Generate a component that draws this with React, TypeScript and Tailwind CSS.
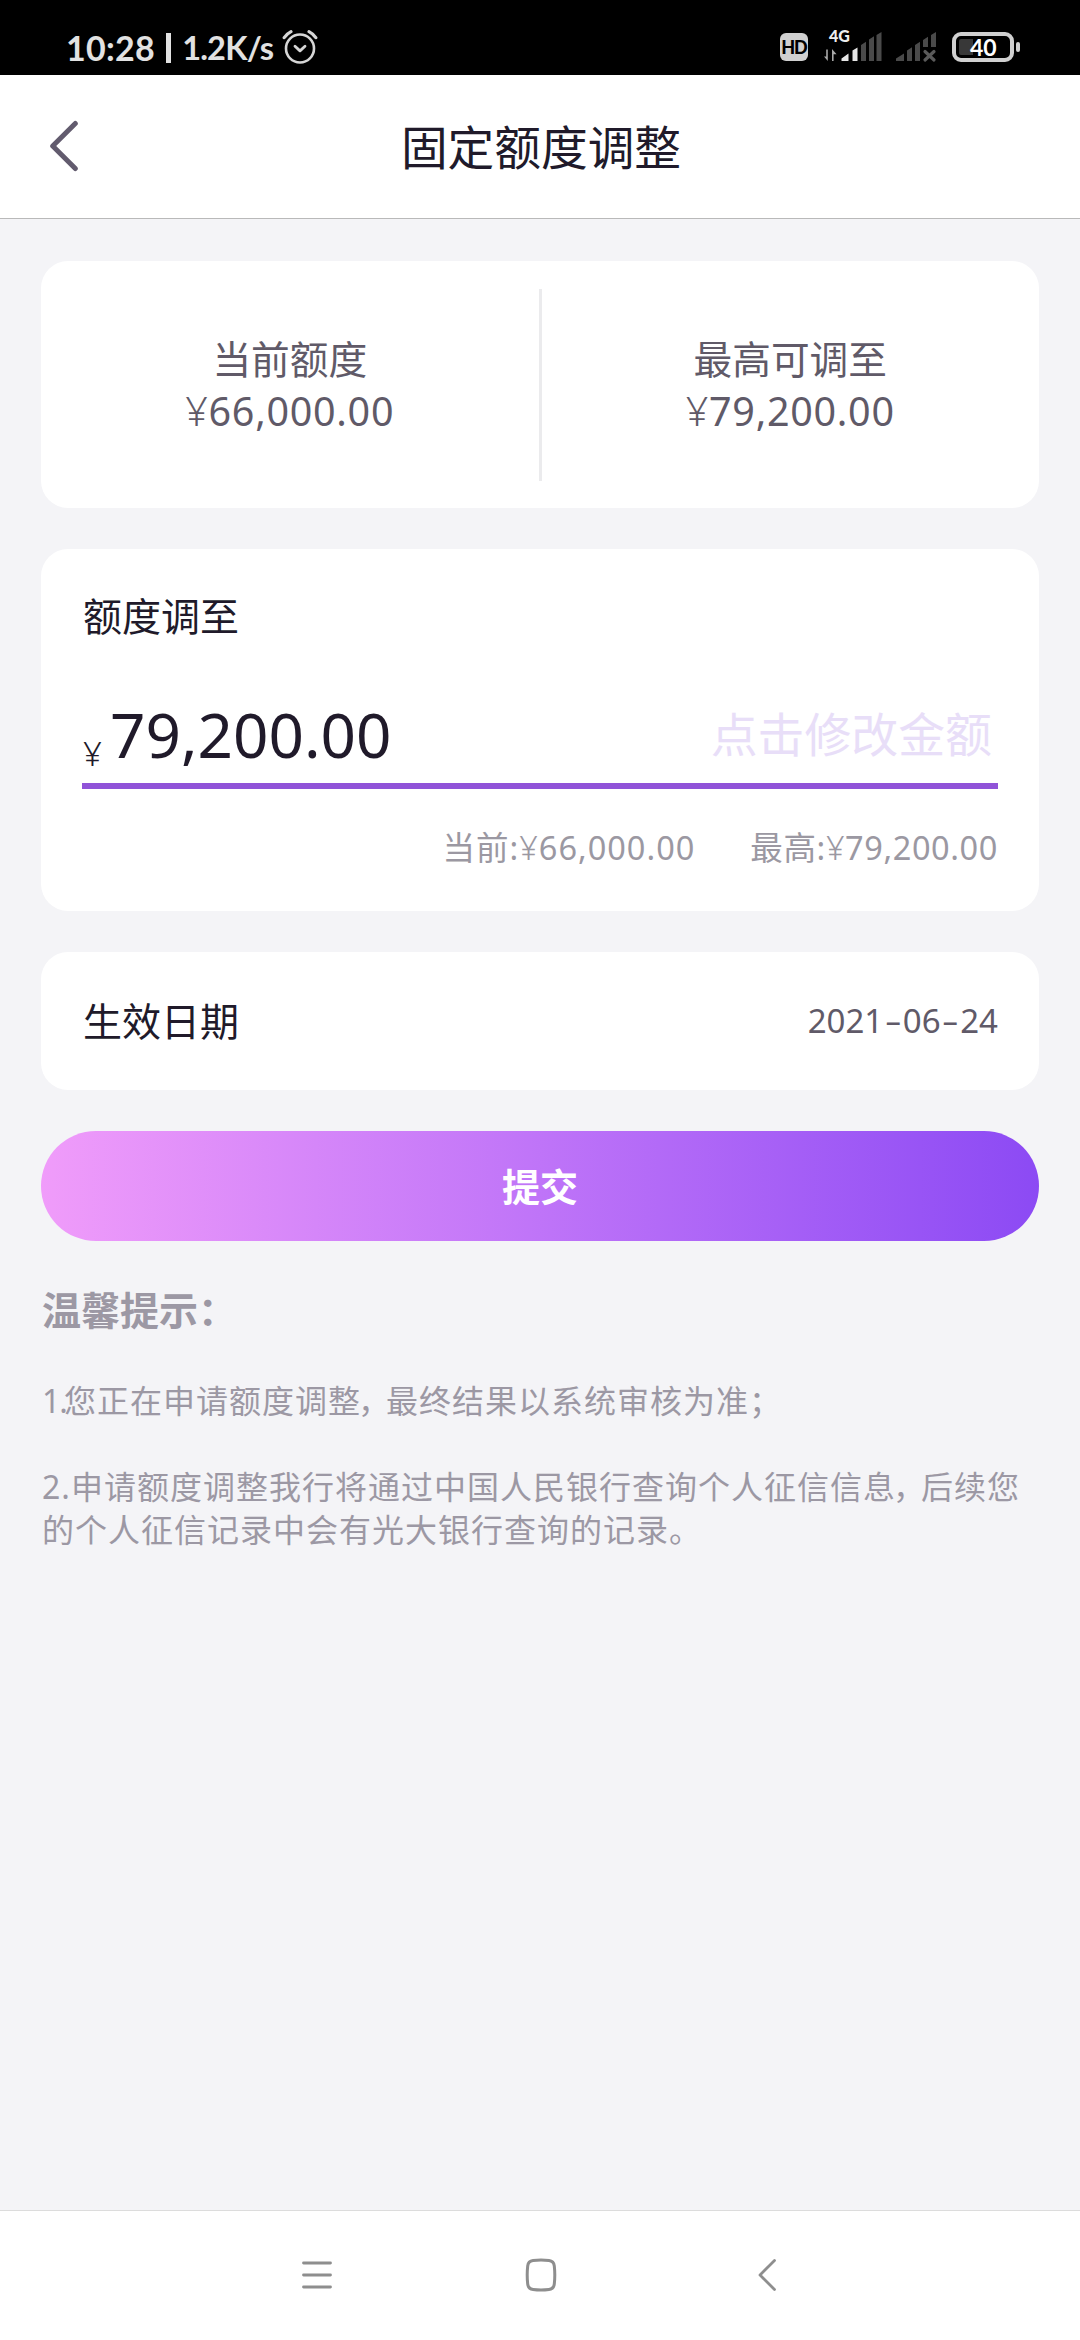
import type { ReactNode } from "react";

function AlarmIcon() {
  return (
    <svg className="ml-[9px] h-[36px] w-[36px]" viewBox="0 0 36 36" fill="none" stroke="#d6d6d6" strokeLinecap="round" strokeLinejoin="round">
      <circle cx="18" cy="19.5" r="14" strokeWidth="2.6" />
      <path d="M13 17.3l5 4.6 5-4.6" strokeWidth="2.8" />
      <path d="M2.2 8.6Q5 4.6 9 2.6M33.8 8.6Q31 4.6 27 2.6" strokeWidth="3.2" />
    </svg>
  );
}

function CellSignal() {
  return (
    <div className="relative h-[34px] w-[58px]">
      <svg className="block h-[34px] w-[58px]" viewBox="0 0 58 34">
        <path d="M3.8 19.5V31L0 26.5h2.2V19.5zM8 31V19l4.6 5.3H9.6V31z" fill="#a8a8a8" />
        <path d="M17.5 31v-2.5l7-5V31zM28.5 31V20.5l5-3V31z" fill="#e6e6e6" />
        <path d="M37 31V15l5-3.2V31zM45 31V9.5l5-3.2V31zM52.500 31V5l5-3v29z" fill="#4a4a4a" />
      </svg>
      <span className="absolute -top-[2px] left-[5px] font-['Lato'] text-[16px] leading-[16px] font-black text-[#eeeeee]">4G</span>
    </div>
  );
}

function NoSignal() {
  return (
    <svg className="ml-[13px] h-[34px] w-[42px]" viewBox="0 0 42 34">
      <path d="M1 31v-2.500l8-5V31zM12 31V20.500l5-3.200V31zM20 31V15l5-3.200V31zM28 17V10l5-3.200V17zM36 17V5l5-3v15z" fill="#4a4a4a" />
      <path d="M30 21.500l9 8.500M39 21.500l-9 8.500" stroke="#5a5a5a" strokeWidth="3.2" strokeLinecap="round" />
    </svg>
  );
}

function Battery() {
  return (
    <div className="ml-[15px] flex items-center">
      <div className="flex h-[30px] w-[62px] items-center rounded-[9px] border-4 border-[#d0d0d0] pl-[3px]">
        <div className="h-[16px] w-[14px] rounded-l-[2px] bg-[#383838]" />
        <span className="-ml-[3px] font-['Lato'] text-[23px] leading-[22px] font-bold text-white">40</span>
      </div>
      <div className="ml-[2px] h-[10px] w-[4px] rounded-[2px] bg-[#d0d0d0]" />
    </div>
  );
}

function StatusBar() {
  return (
    <div className="flex h-[75px] items-start bg-black pr-[60px] pl-[66px]">
      <div className="flex pt-[29px]">
        <span className="mt-[2px] font-['Lato'] text-[34px] leading-[34px] font-bold tracking-[0.300px] text-[#e2e2e2]">10:28</span>
        <span className="mt-[4px] ml-[11px] h-[30px] w-[5px] bg-[#e2e2e2]" />
        <span className="mt-[2px] ml-[11px] font-['Lato'] text-[32.500px] leading-[34px] font-bold tracking-[-0.800px] text-[#e2e2e2]">1.2K/s</span>
        <AlarmIcon />
      </div>
      <div className="ml-auto flex items-start pt-[30px]">
        <div className="mt-[3px] mr-[16px] flex h-[28px] w-[28px] items-center justify-center rounded-[6px] bg-[#d0d0d0] font-['Lato'] text-[18px] leading-none font-black tracking-[-1px] text-black">
          HD
        </div>
        <CellSignal />
        <NoSignal />
        <div className="pt-[2px]">
          <Battery />
        </div>
      </div>
    </div>
  );
}

function Header() {
  return (
    <header className="relative flex h-[144px] items-center justify-center border-b border-[#b9b9b9] bg-white">
      <svg className="absolute top-[45px] left-[47px] h-[52px] w-[34px]" viewBox="0 0 34 52" fill="none" stroke="#625b6e" strokeWidth="5" strokeLinecap="round" strokeLinejoin="round">
        <path d="M28.300 3.500L5.700 26l22.600 22.500" />
      </svg>
      <h1 className="ml-[2px] text-[46.700px] leading-[60px] text-[#201a2a]">固定额度调整</h1>
    </header>
  );
}

function Yen() {
  return <span className="font-light">¥</span>;
}

function Summary({ label, value }: { label: string; value: string }) {
  return (
    <div className="flex flex-1 flex-col items-center text-[#605a68]">
      <div className="text-[38.700px] leading-[52px]">{label}</div>
      <div className="text-[39.500px] leading-[52px] tracking-[0.700px]">
        <Yen />
        {value}
      </div>
    </div>
  );
}

function Card({ className, children }: { className: string; children: ReactNode }) {
  return <section className={"rounded-[27px] bg-white " + className}>{children}</section>;
}

function Comma() {
  return <span className="relative -left-[3px] tracking-[-7px]">，</span>;
}

export default function App() {
  return (
    <div className="flex h-[2340px] w-[1080px] flex-col overflow-hidden bg-[#f4f4f7] font-['Noto_Sans','Noto_Sans_CJK_SC',sans-serif]">
      <StatusBar />
      <Header />
      <main className="flex flex-1 flex-col px-[41px] pt-[42px]">
        <Card className="flex h-[247px] items-center">
          <Summary label="当前额度" value="66,000.00" />
          <div className="h-[192px] w-[3px] bg-[#ebebed]" />
          <Summary label="最高可调至" value="79,200.00" />
        </Card>

        <Card className="mt-[41px] h-[362px] px-[41px] pt-[41px]">
          <div className="pl-px text-[39px] leading-[52px] text-[#201a2a]">额度调至</div>
          <div className="mt-[48px] flex h-[99px] items-end justify-between border-b-[6px] border-[#9053d8] pr-[6px]">
            <div className="mb-[9px] flex items-baseline text-[#201a2a]">
              <span className="relative top-[8px] left-px w-[28px] text-[33px] leading-[50px] font-light">¥</span>
              <span className="mb-[4px] text-[62px] leading-[72px]">79,200.00</span>
            </div>
            <span className="mb-[19px] text-[46.900px] leading-[60px] text-[#e8def8]">点击修改金额</span>
          </div>
          <div className="mt-[37px] flex justify-end gap-[55px] text-[32.500px] leading-[44px] text-[#9b98a2]">
            <span className="tracking-[1px]">当前:<Yen />66,000.00</span>
            <span className="tracking-[0.600px]">最高:<Yen />79,200.00</span>
          </div>
        </Card>

        <Card className="mt-[41px] flex h-[138px] items-center justify-between px-[41px]">
          <span className="pl-px text-[39px] leading-[52px] text-[#201a2a]">生效日期</span>
          <span className="text-[33px] leading-[44px] text-[#605a68]">
            2021<span className="mx-[4.500px] inline-block scale-x-160">-</span>06<span className="mx-[4.500px] inline-block scale-x-160">-</span>24
          </span>
        </Card>

        <button className="mt-[41px] flex h-[110px] w-full items-center justify-center rounded-full bg-linear-to-r/srgb from-[#f09cfa] via-[#bf74f8] to-[#8c4af4] text-[38px] leading-[52px] font-bold text-white">
          提交
        </button>

        <div className="mt-[43px] pl-px text-[39px] leading-[52px] font-bold text-[#9c98a4]">温馨提示：</div>
        <div className="pl-px text-[32px] leading-[43px] tracking-[1px] text-[#9c98a4]">
          <p className="mt-[43px] whitespace-nowrap">
            <span className="inline-block w-[22px] tracking-[-1px]">1.</span>您正在申请额度调整<Comma />最终结果以系统审核为准；
          </p>
          <p className="mt-[43px] whitespace-nowrap">
            <span className="inline-block w-[29px]">2.</span>申请额度调整我行将通过中国人民银行查询个人征信信息<Comma />后续您
            <br />
            的个人征信记录中会有光大银行查询的记录。
          </p>
        </div>
      </main>

      <nav className="flex h-[130px] items-start justify-between border-t border-[#dcdcdc] bg-white pt-[44px] pr-[295px] pl-[299px]">
        <svg className="h-[40px] w-[36px]" viewBox="0 0 36 40" stroke="#8e8e8e" strokeWidth="2.8" strokeLinecap="round">
          <path d="M4.500 8h27M4.500 20h27M4.500 32h27" />
        </svg>
        <svg className="h-[40px] w-[36px]" viewBox="0 0 36 40" fill="none" stroke="#8e8e8e" strokeWidth="3">
          <path d="M9 5.600Q17 4.600 25 5.600Q29.800 6.100 30.300 11Q31.300 20 30.300 29Q29.800 33.900 25 34.400Q17 35.400 9 34.400Q4.200 33.900 3.700 29Q2.700 20 3.700 11Q4.200 6.100 9 5.600z" />
        </svg>
        <svg className="h-[40px] w-[36px]" viewBox="0 0 36 40" fill="none" stroke="#8e8e8e" strokeWidth="2.8" strokeLinecap="round" strokeLinejoin="round">
          <path d="M25.500 5.500L11 20l14.500 14.500" />
        </svg>
      </nav>
    </div>
  );
}
